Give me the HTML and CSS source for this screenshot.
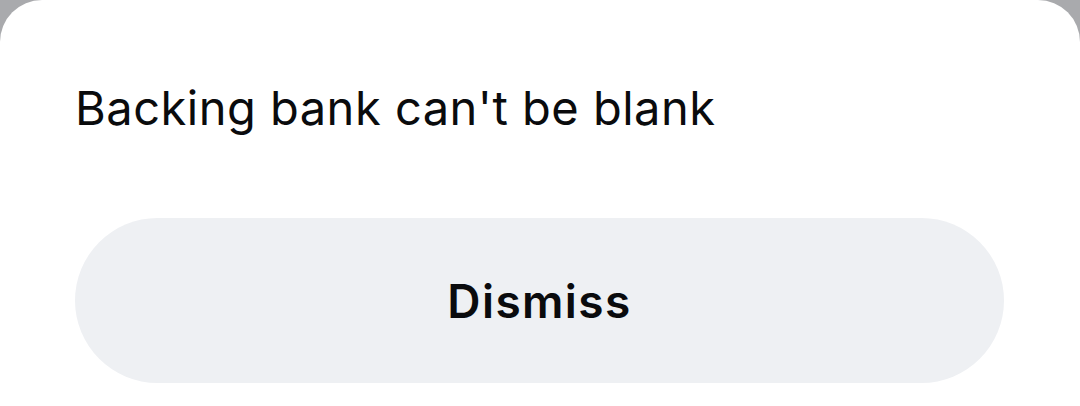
FILE: index.html
```html
<!DOCTYPE html>
<html lang="en">
<head>
    <meta charset="UTF-8">
    <meta name="viewport" content="width=device-width, initial-scale=1.0">
    <title>Error</title>
    <link rel="stylesheet" href="styles.css">
</head>
<body>
    <div class="sheet">
        <p class="message">Backing bank can't be blank</p>
        <button class="dismiss-btn">Dismiss</button>
    </div>
</body>
</html>
```

FILE: styles.css
```css
body {
    background-color: #a9aaad;
    font-family: Inter, "Noto Sans", sans-serif;
    margin: 0;
    padding: 0;
    height: 100vh;
    overflow: hidden;
}
.sheet {
    background-color: white;
    border-radius: 42px 42px 0 0;
    height: 100%;
    padding: 78px 76px 0 75px;
    box-sizing: border-box;
    display: flex;
    flex-direction: column;
}
.message {
    margin: 0;
    font-size: 47px;
    line-height: 60px;
    color: #0a0b0d;
    letter-spacing: 0.5px;
}
.dismiss-btn {
    margin-top: 80px;
    height: 165px;
    border: none;
    border-radius: 83px;
    background-color: #eef0f3;
    color: #0a0b0d;
    font-family: Inter, "Noto Sans", sans-serif;
    font-size: 46px;
    font-weight: 600;
    letter-spacing: 1.4px;
    cursor: pointer;
}
```
